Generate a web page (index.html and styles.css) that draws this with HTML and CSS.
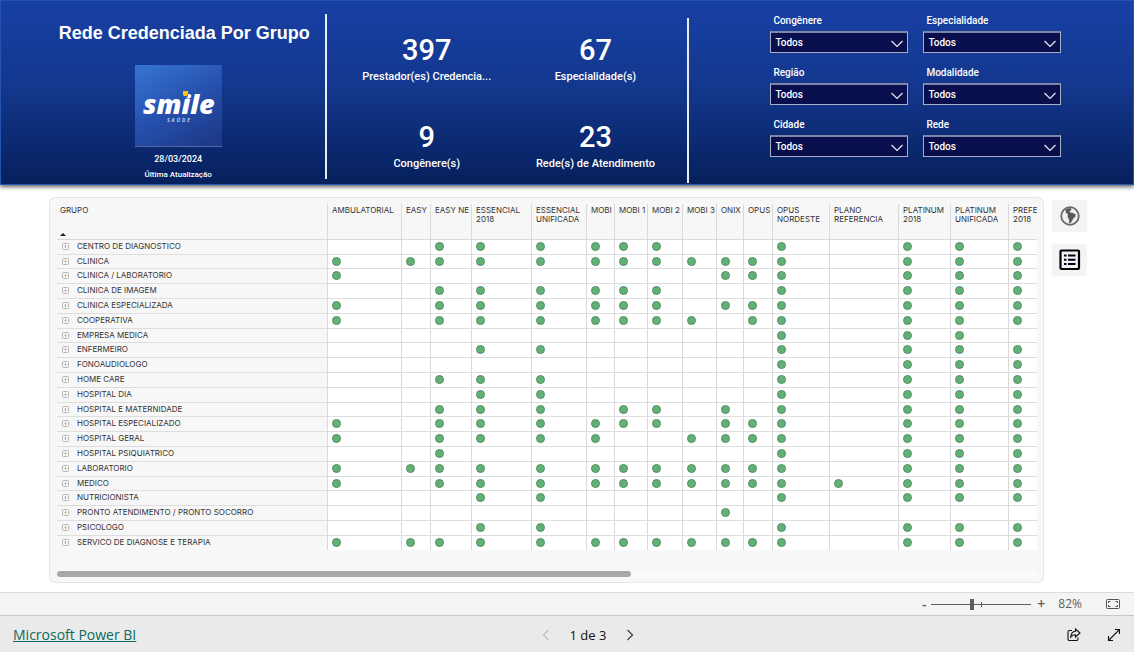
FILE: index.html
```
<!DOCTYPE html>
<html lang="pt-BR">
<head>
<meta charset="utf-8">
<title>Rede Credenciada Por Grupo</title>
<link rel="stylesheet" href="styles.css">
</head>
<body>
<header class="banner">
  <section class="brand">
    <h1 class="title">Rede Credenciada Por Grupo</h1>
    <svg class="logo" viewBox="0 0 87 82" role="img" aria-label="Smile Saúde">
      <defs>
        <linearGradient id="logo-bg" x1="0.2" y1="0" x2="0.8" y2="1">
          <stop offset="0" stop-color="#3570cf"/>
          <stop offset="0.5" stop-color="#2650ad"/>
          <stop offset="1" stop-color="#1d3a88"/>
        </linearGradient>
      </defs>
      <rect width="87" height="82" fill="url(#logo-bg)"/>
      <rect y="81" width="87" height="1" fill="#5068a8"/>
      <text class="logo-name" x="8" y="49">smile</text>
      <path d="M46 26h7.500l-1 6.500h-6.500z" fill="#2954b2"/>
      <path d="M48 26h5v3l-1.500 2h-2.500l-1-1z" fill="#fdc60b"/>
      <text class="logo-sub" x="32" y="57">SAÚDE</text>
    </svg>
    <p class="date">28/03/2024</p>
    <p class="date-label">Última Atualização</p>
  </section>
  <span class="rule"></span>
  <section class="kpis">
    <div class="kpi"><strong>397</strong><span>Prestador(es) Credencia...</span></div>
    <div class="kpi"><strong>67</strong><span>Especialidade(s)</span></div>
    <div class="kpi"><strong>9</strong><span>Congênere(s)</span></div>
    <div class="kpi"><strong>23</strong><span>Rede(s) de Atendimento</span></div>
  </section>
  <span class="rule rule-low"></span>
  <section class="filters" id="filters"></section>
</header>

<main class="report">
  <section class="card">
    <div class="viewport">
      <table class="matrix">
        <colgroup id="cols"></colgroup>
        <thead><tr id="head"></tr></thead>
        <tbody id="rows"></tbody>
      </table>
    </div>
    <div class="scroll"><div class="scroll-thumb"></div></div>
  </section>
  <nav class="views" aria-label="Visualizações">
    <button type="button" class="view" aria-label="Mapa">
      <svg width="20" height="20" viewBox="0 0 20 20"><circle cx="10" cy="10" r="8.800" fill="#f0f0f0" stroke="#6a6a6a" stroke-width="1.800"/><path d="M5.500 3.500L9 2l2.500.8-.5 1.700-1.500.7.5 1.300 2.500.2 3.200 1.800-.5 2.500-2 1.500-1.200 2.500-2 2.500-1-.5.2-3-1.700-3.500.5-2-2.300-2.200z" fill="#5a5a5a"/></svg>
    </button>
    <button type="button" class="view" aria-label="Lista">
      <svg width="22" height="22" viewBox="0 0 22 22"><rect x="1.500" y="1.500" width="18.500" height="18.500" rx="1" fill="#f4eefc" stroke="#000" stroke-width="2.200"/><path d="M5 6.500h2.500M9 6.500h7.500M5 10.800h2.500M9 10.800h7.500M5 15.100h2.500M9 15.100h7.500" stroke="#000" stroke-width="2"/></svg>
    </button>
  </nav>
</main>

<div class="zoombar">
  <button type="button" class="step" aria-label="Reduzir">-</button>
  <input class="zoom" type="range" min="10" max="180" value="78" aria-label="Zoom">
  <button type="button" class="step" aria-label="Ampliar">+</button>
  <span class="percent">82%</span>
  <button type="button" class="icon fit" aria-label="Ajustar à página">
    <svg width="14" height="10" viewBox="0 0 14 10" fill="none" stroke="#555"><rect x=".5" y=".5" width="13" height="9" rx="1"/><path d="M2.500 4V2.500H4.500M9.500 2.500h2V4M11.500 6v1.500h-2M4.500 7.500h-2V6"/></svg>
  </button>
</div>

<footer class="footer">
  <a class="powerbi" href="#">Microsoft Power BI</a>
  <div class="pager">
    <button type="button" class="icon" aria-label="Página anterior" disabled><svg width="8" height="12" viewBox="0 0 8 12" fill="none" stroke="#bdbdbd" stroke-width="1.200"><path d="M6.500 1l-5 5 5 5"/></svg></button>
    <span class="page">1 de 3</span>
    <button type="button" class="icon" aria-label="Próxima página"><svg width="8" height="12" viewBox="0 0 8 12" fill="none" stroke="#444" stroke-width="1.300"><path d="M1.500 1l5 5-5 5"/></svg></button>
  </div>
  <div class="actions">
    <button type="button" class="icon" aria-label="Compartilhar"><svg width="14" height="14" viewBox="0 0 14 14" fill="none" stroke="#111" stroke-width="1.100"><path d="M5 2.500H2.500a1.500 1.500 0 0 0-1.500 1.500v7a1.500 1.500 0 0 0 1.500 1.500h7a1.500 1.500 0 0 0 1.500-1.500v-1.500"/><path d="M8.500 1l4.500 4-4.500 4V6.800C6.300 6.800 4.800 7.500 3.800 9 3.900 5.500 6 3.400 8.500 3.200z"/></svg></button>
    <button type="button" class="icon" aria-label="Tela inteira"><svg width="14" height="14" viewBox="0 0 14 14" fill="none" stroke="#111" stroke-width="1.100"><path d="M1.500 12.500l11-11M8 1.500h4.500V6M1.500 8v4.500H6"/></svg></button>
  </div>
</footer>
<script src="script.js"></script>
</body>
</html>
```
FILE: styles.css
```
* { box-sizing: border-box; }
body {
  margin: 0;
  min-height: 100vh;
  display: flex;
  flex-direction: column;
  background: #fff;
  font-family: Roboto, "Liberation Sans", sans-serif;
}
h1, p { margin: 0; }
button { border: 0; padding: 0; background: none; font: inherit; color: inherit; }

.banner {
  display: grid;
  grid-template-columns: 325fr 2px 360fr 2px 445fr;
  height: 185px;
  border: 1px solid #2453b0;
  background: linear-gradient(#1840a4, #14388f 45%, #06205c);
  box-shadow: 0 2px 4px rgba(0, 0, 0, 0.6);
  color: #fff;
}
.brand { display: flex; flex-direction: column; align-items: center; padding: 20px 0 0 30px; }
.title { padding-left: 12px; font: bold 18px/24px "Liberation Sans", sans-serif; white-space: nowrap; }
.logo { width: 87px; height: 82px; margin-top: 20px; }
.logo-name { font: italic 800 27px "Open Sans", sans-serif; fill: #fff; }
.logo-sub { font: italic 600 5px "Open Sans", sans-serif; letter-spacing: 2px; fill: #dfe7f7; }
.date { font-weight: 500; font-size: 9px; line-height: 12px; margin-top: 6px; }
.date-label { font-weight: 500; font-size: 8px; line-height: 12px; margin-top: 4px; }
.rule { height: 165px; margin-top: 13px; background: #e8ecf5; }
.rule-low { margin-top: 17px; }

.kpis { display: grid; grid-template-columns: 1fr 1fr; grid-auto-rows: 87px; padding: 32px 7px 0 15px; }
.kpi { display: flex; flex-direction: column; align-items: center; }
.kpi strong { font-weight: 500; font-size: 29px; line-height: 34px; }
.kpi span { font-weight: 500; font-size: 11px; line-height: 20px; white-space: nowrap; }

.filters {
  display: grid;
  grid-template-columns: 138px 138px;
  gap: 14px 15px;
  align-content: start;
  justify-content: center;
  padding: 14px 0 0 10px;
}
.filter { position: relative; display: flex; flex-direction: column; gap: 4px; }
.filter label { font-weight: 500; font-size: 10px; line-height: 12px; padding-left: 3px; }
.filter select {
  appearance: none;
  height: 22px;
  padding: 0 4px;
  border: 1px solid #a9aec8;
  border-top: 2px solid #7d84a8;
  border-radius: 0;
  background: #090f4c;
  color: #fff;
  font: 500 10px/18px Roboto, sans-serif;
}
.filter svg { position: absolute; right: 5px; bottom: 5px; pointer-events: none; }

.report { flex: 1; display: flex; align-items: flex-start; gap: 8px; padding: 12px 47px 8px 49px; }
.card {
  flex: 1;
  min-width: 0;
  padding: 6px 6px 4px 7px;
  border: 1px solid #e6e6e6;
  border-radius: 6px;
  background: #f7f7f7;
}
.viewport { overflow: hidden; }
.matrix { table-layout: fixed; width: 1010px; border-collapse: separate; border-spacing: 0; font: 8px/9px Inter, Roboto, sans-serif; color: #333; }
.matrix th { font-weight: 400; text-align: left; padding: 0; }
.matrix thead th { height: 36px; padding: 2px 0 0 4px; vertical-align: top; border-left: 1px solid #d9d9d9; border-bottom: 1px solid #d9d9d9; }
.matrix thead th:first-child { padding-left: 3px; border-left: 0; }
.sort { display: block; width: 0; height: 0; margin-top: 18px; border: 3px solid transparent; border-top: 0; border-bottom-color: #222; }
.matrix tbody tr { height: 15px; }
.matrix tbody tr:nth-child(5n+2), .matrix tbody tr:last-child { height: 14px; }
.matrix td { padding: 2px 0 0 4px; vertical-align: top; background: #fff; border-left: 1px solid #d9d9d9; border-bottom: 1px solid #dedede; }
.matrix tbody th { vertical-align: top; border-bottom: 1px solid #dedede; }
.matrix tbody tr:last-child > * { border-bottom: 0; }
.group { display: flex; align-items: center; gap: 8px; padding-left: 5px; height: 12px; color: #333; white-space: nowrap; }
.expand { width: 7px; height: 7px; display: flex; }
.dot { display: block; width: 9px; height: 9px; border: 1px solid #528f63; border-radius: 50%; background: #63b077; }
.scroll { height: 7px; margin-top: 21px; background: #fbfbfb; }
.scroll-thumb { width: 58.600%; height: 6px; border-radius: 3px; background: #a8a8a8; }
.views { display: flex; flex-direction: column; gap: 12px; padding-top: 3px; }
.view { display: flex; align-items: center; justify-content: center; width: 35px; height: 32px; background: #f4f4f4; }

.zoombar {
  display: flex;
  align-items: center;
  justify-content: flex-end;
  height: 23px;
  padding-right: 14px;
  border-top: 1px solid #dcdcdc;
  background: #f4f4f4;
  color: #605e5c;
  font: 12px/20px "Open Sans", sans-serif;
}
.step { width: 10px; font-size: 14px; font-weight: 600; line-height: 20px; text-align: center; }
.zoom {
  appearance: none;
  width: 100px;
  height: 11px;
  margin: 0 5px 0 2px;
  background:
    linear-gradient(#605e5c, #605e5c) 50px 3px / 1px 5px no-repeat,
    linear-gradient(#605e5c, #605e5c) 0 5px / 100px 1px no-repeat;
}
.zoom::-webkit-slider-thumb { appearance: none; width: 4px; height: 11px; background: #605e5c; }
.percent { margin-left: 12px; }
.fit { margin-left: 24px; }
.icon { display: flex; }

.footer {
  display: grid;
  grid-template-columns: 1fr auto 1fr;
  align-items: center;
  height: 37px;
  padding: 2px 13px 0;
  border-top: 1px solid #c8c8c8;
  background: #eaeaea;
  font: 14px/20px "Open Sans", sans-serif;
}
.powerbi { color: #0b6a5c; justify-self: start; }
.pager { display: flex; align-items: center; gap: 20px; margin-right: -42px; color: #111; }
.page { font-size: 13px; }
.actions { display: flex; justify-content: flex-end; gap: 26px; }
```
FILE: script.js
```
const filters = ["Congênere", "Especialidade", "Região", "Modalidade", "Cidade", "Rede"];
document.getElementById("filters").innerHTML = filters.map((name, i) => `
  <div class="filter">
    <label for="filter-${i}">${name}</label>
    <select id="filter-${i}"><option>Todos</option></select>
    <svg width="12" height="8" viewBox="0 0 12 8" fill="none" stroke="#e6e8f2" stroke-width="1.200"><path d="M.5 1L6 6.500 11.500 1"/></svg>
  </div>`).join("");

const columns = [
  ["AMBULATORIAL", 74], ["EASY", 29], ["EASY NE", 41], ["ESSENCIAL<br>2018", 60],
  ["ESSENCIAL<br>UNIFICADA", 55], ["MOBI", 28], ["MOBI 1", 33], ["MOBI 2", 35],
  ["MOBI 3", 34], ["ONIX", 27], ["OPUS", 29], ["OPUS<br>NORDESTE", 57],
  ["PLANO<br>REFERENCIA", 69], ["PLATINUM<br>2018", 52], ["PLATINUM<br>UNIFICADA", 58],
  ["PREFERENCIAL<br>2018", 59]
];
const rows = [
  ["CENTRO DE DIAGNOSTICO",              "..xxxxxx...x.xxx"],
  ["CLINICA",                            "xxxxxxxxxxxx.xxx"],
  ["CLINICA / LABORATORIO",              "x........xxx.xxx"],
  ["CLINICA DE IMAGEM",                  "..xxxxxx...x.xxx"],
  ["CLINICA ESPECIALIZADA",              "x.xxxxxx.xxx.xxx"],
  ["COOPERATIVA",                        "x.xxxxxxx.xx.xxx"],
  ["EMPRESA MEDICA",                     "...........x.xx."],
  ["ENFERMEIRO",                         "...xx......x.xxx"],
  ["FONOAUDIOLOGO",                      "...........x.xxx"],
  ["HOME CARE",                          "..xxx......x.xxx"],
  ["HOSPITAL DIA",                       "...xx......x.xxx"],
  ["HOSPITAL E MATERNIDADE",             "..xxx.xx.x.x.xxx"],
  ["HOSPITAL ESPECIALIZADO",             "x.xxxxxx.xxx.xxx"],
  ["HOSPITAL GERAL",                     "x.xxxx..xxxx.xxx"],
  ["HOSPITAL PSIQUIATRICO",              "..x........x.xxx"],
  ["LABORATORIO",                        "xxxxxxxxxxxx.xxx"],
  ["MEDICO",                             "x.xxxxxxxxxxxxxx"],
  ["NUTRICIONISTA",                      "...xx......x.xxx"],
  ["PRONTO ATENDIMENTO / PRONTO SOCORRO", ".........x......"],
  ["PSICOLOGO",                          "...xx......x.xxx"],
  ["SERVICO DE DIAGNOSE E TERAPIA",      "xxxxxxxxxxxx.xxx"]
];

document.getElementById("cols").innerHTML =
  `<col style="width:270px">` + columns.map(([, w]) => `<col style="width:${w}px">`).join("");
document.getElementById("head").innerHTML =
  `<th scope="col">GRUPO<span class="sort"></span></th>` +
  columns.map(([name]) => `<th scope="col">${name}</th>`).join("");
document.getElementById("rows").innerHTML = rows.map(([name, marks]) => `
  <tr><th scope="row"><div class="group">
    <button type="button" class="expand" aria-label="Expandir"><svg width="7" height="7" viewBox="0 0 7 7" fill="none" stroke="#b5b5b5"><rect x=".5" y=".5" width="6" height="6" rx="1"/><path d="M3.500 2v3M2.500 3.500h2"/></svg></button>
    <span>${name}</span></div></th>` +
  [...marks].map(m => `<td>${m === "x" ? '<span class="dot"></span>' : ""}</td>`).join("") + "</tr>").join("");
```
